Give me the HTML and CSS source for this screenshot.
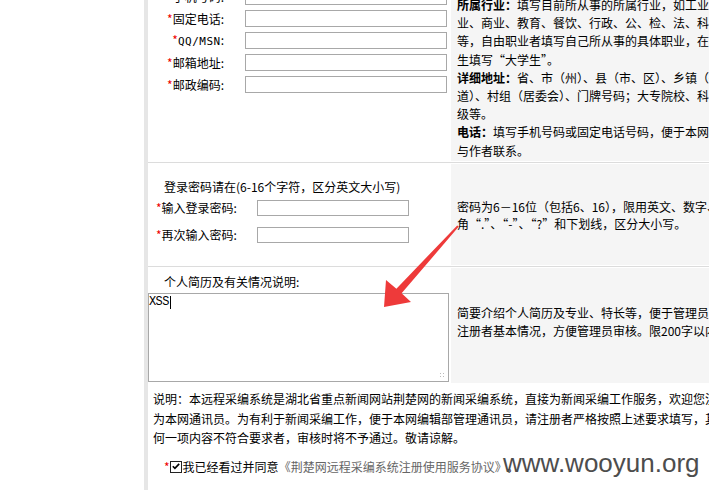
FILE: index.html
```html
<!DOCTYPE html>
<html lang="zh-CN">
<head>
<meta charset="utf-8">
<title>注册</title>
<link rel="stylesheet" href="styles.css">
</head>
<body>
<div class="page">
  <div class="row row1">
    <div class="cell-left fields1">
      <div class="field"><span class="lbl"><span class="req">*</span>手机号码:</span><span class="inp inp-wide"></span></div>
      <div class="field"><span class="lbl"><span class="req">*</span>固定电话:</span><span class="inp inp-wide"></span></div>
      <div class="field"><span class="lbl"><span class="req">*</span><span class="latin">QQ/MSN</span>:</span><span class="inp inp-wide"></span></div>
      <div class="field"><span class="lbl"><span class="req">*</span>邮箱地址:</span><span class="inp inp-wide"></span></div>
      <div class="field"><span class="lbl"><span class="req">*</span>邮政编码:</span><span class="inp inp-wide"></span></div>
    </div>
    <div class="cell-right help1">
      <div class="ln"><b>所属行业：</b>填写目前所从事的所属行业，如工业、农</div>
      <div class="ln">业、商业、教育、餐饮、行政、公、检、法、科研、医疗</div>
      <div class="ln">等，自由职业者填写自己所从事的具体职业，在校学</div>
      <div class="ln">生填写“大学生”。</div>
      <div class="ln"><b>详细地址：</b>省、市（州）、县（市、区）、乡镇（街</div>
      <div class="ln">道）、村组（居委会）、门牌号码；大专院校、科研院所</div>
      <div class="ln">级等。</div>
      <div class="ln"><b>电话：</b>填写手机号码或固定电话号码，便于本网编辑</div>
      <div class="ln">与作者联系。</div>
    </div>
  </div>

  <div class="row row2">
    <div class="cell-left">
      <div class="title">登录密码请在(6-16个字符，区分英文大小写)</div>
      <div class="field2 f2a"><span class="lbl2"><span class="req">*</span>输入登录密码:</span><span class="inp inp-narrow"></span></div>
      <div class="field2 f2b"><span class="lbl2"><span class="req">*</span>再次输入密码:</span><span class="inp inp-narrow"></span></div>
    </div>
    <div class="cell-right help2">
      <div class="ln">密码为6－16位（包括6、16），限用英文、数字、半</div>
      <div class="ln">角“.”、“-”、“?”和下划线，区分大小写。</div>
    </div>
  </div>

  <div class="row row3">
    <div class="cell-left">
      <div class="title title3">个人简历及有关情况说明:</div>
      <div class="textarea"><span class="typed">XSS</span><span class="caret"></span><span class="grip"></span></div>
    </div>
    <div class="cell-right help3">
      <div class="ln">简要介绍个人简历及专业、特长等，便于管理员了解</div>
      <div class="ln">注册者基本情况，方便管理员审核。限200字以内。</div>
    </div>
  </div>

  <div class="notes">
    <div class="ln">说明：本远程采编系统是湖北省重点新闻网站荆楚网的新闻采编系统，直接为新闻采编工作服务，欢迎您注册成</div>
    <div class="ln">为本网通讯员。为有利于新闻采编工作，便于本网编辑部管理通讯员，请注册者严格按照上述要求填写，其中任</div>
    <div class="ln">何一项内容不符合要求者，审核时将不予通过。敬请谅解。</div>
  </div>

  <div class="agree">
    <span class="req">*</span><span class="check"><svg width="11" height="11" viewBox="0 0 11 11"><path d="M2 5.2 L4.3 7.6 L9 2.6" fill="none" stroke="#000" stroke-width="1.8"/></svg></span>我已经看过并同意<span class="proto">《荆楚网远程采编系统注册使用服务协议》</span>。
  </div>
</div>

<svg class="arrow" width="709" height="490" viewBox="0 0 709 490">
  <polygon points="384,307 386,280 396.4,288.7 457.2,225.4 458.8,226.6 401.6,293.3 411,302" fill="#ee3a3a"/>
</svg>
<div class="watermark">www.wooyun.org</div>
</body>
</html>
```

FILE: styles.css
```css
html, body {
  margin: 0;
  padding: 0;
  background: #fff;
  overflow: hidden;
  width: 709px;
  height: 490px;
}

body {
  position: relative;
  font-family: "Noto Sans CJK SC", "Noto Sans", sans-serif;
  font-size: 12px;
  color: #000;
}

.page {
  margin-left: 144px;
  border-left: 4px solid #e6e6e6;
  width: 620px;
  height: 520px;
}

.row {
  display: grid;
  grid-template-columns: 303px 300px;
  border-bottom: 1px solid #dcdcdc;
  padding: 1px 0;
}

.cell-left {
  background: #fff;
}

.cell-right {
  background: #f5f5f5;
  padding-left: 6px;
  display: flex;
  flex-direction: column;
  justify-content: center;
}

.ln {
  white-space: nowrap;
}

.req {
  color: #e00;
}

/* row 1 */
.row1 {
  margin-top: -21px;
}
.row1 .cell-left,
.row1 .cell-right {
  height: 181px;
}
.fields1 {
  padding-top: 8px;
  box-sizing: border-box;
  display: flex;
  flex-direction: column;
  gap: 5px;
}
.field {
  display: flex;
  align-items: center;
  height: 17px;
}
.lbl {
  width: 76px;
  text-align: right;
  line-height: 17px;
  margin-right: 21px;
  white-space: nowrap;
}
.latin {
  font-family: "DejaVu Sans Mono", monospace;
  font-size: 11px;
  letter-spacing: 0.5px;
}
.inp {
  display: block;
  box-sizing: border-box;
  background: #fff;
  border: 1px solid #a8a8a8;
}
.inp-wide {
  width: 202px;
  height: 17px;
}
.help1 {
  justify-content: flex-start;
  padding-top: 16px;
  box-sizing: border-box;
  line-height: 18.2px;
}

/* row 2 */
.row2 .cell-left,
.row2 .cell-right {
  height: 101px;
}
.title {
  padding-left: 16px;
  line-height: 18px;
  padding-top: 14px;
  white-space: nowrap;
}
.field2 {
  display: flex;
  align-items: center;
  height: 16px;
}
.f2a {
  margin-top: 4px;
}
.f2b {
  margin-top: 11px;
}
.lbl2 {
  width: 101px;
  padding-left: 8px;
  line-height: 16px;
  white-space: nowrap;
}
.inp-narrow {
  width: 152px;
  height: 16px;
}
.help2 {
  line-height: 17px;
}

/* row 3 */
.row3 {
  border-bottom: none;
}
.row3 .cell-left,
.row3 .cell-right {
  height: 115px;
}
.title3 {
  padding-top: 5px;
}
.textarea {
  position: relative;
  margin-top: 2px;
  width: 301px;
  height: 89px;
  box-sizing: border-box;
  border: 1px solid #a8a8a8;
  background: #fff;
  font-family: "Liberation Mono", monospace;
  font-size: 12px;
  line-height: 14px;
  padding: 1px 0 0 0;
  display: flex;
  align-items: flex-start;
}
.typed {
  color: #000;
  letter-spacing: -0.6px;
}
.caret {
  display: inline-block;
  width: 1px;
  height: 13px;
  background: #000;
  margin-top: 1px;
  margin-left: 1px;
}
.grip {
  position: absolute;
  right: 2px;
  bottom: 2px;
  width: 7px;
  height: 7px;
  background-image: radial-gradient(circle, #bbb 0.8px, transparent 1px);
  background-size: 3px 3px;
}
.help3 {
  padding-bottom: 8px;
  box-sizing: border-box;
  line-height: 18px;
}

/* notes */
.notes {
  padding-top: 5px;
  padding-left: 5px;
  line-height: 19.5px;
}

.agree {
  margin-top: 10px;
  padding-left: 16px;
  line-height: 18px;
  display: flex;
  align-items: center;
  white-space: nowrap;
}
.agree .req {
  margin-right: 0;
}
.check {
  display: inline-flex;
  align-items: center;
  justify-content: center;
  width: 12px;
  height: 12px;
  box-sizing: border-box;
  border: 1px solid #222;
  background: #fff;
  margin-right: 1px;
}
.proto {
  color: #666;
}

.arrow {
  position: absolute;
  left: 0;
  top: 0;
  pointer-events: none;
}

.watermark {
  position: absolute;
  left: 503px;
  top: 448px;
  font-family: "Liberation Sans", Arial, sans-serif;
  font-size: 26px;
  line-height: 30px;
  color: #4d4d4d;
  white-space: nowrap;
  pointer-events: none;
}
```
